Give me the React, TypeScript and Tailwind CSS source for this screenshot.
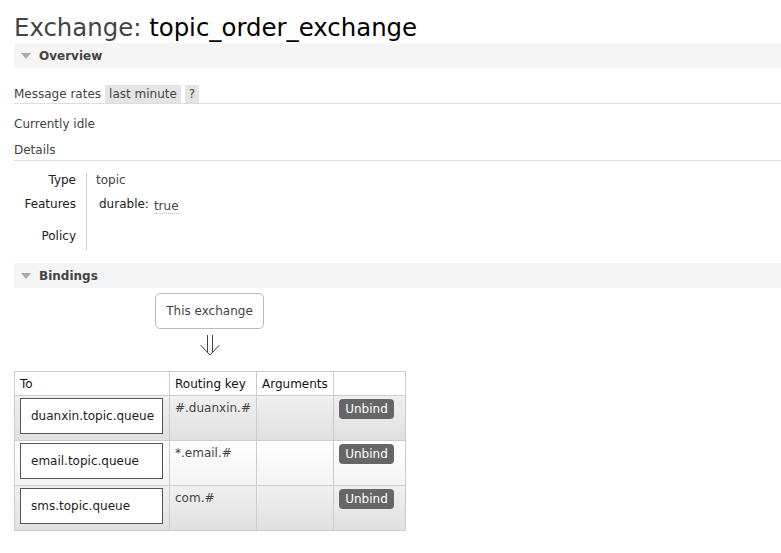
import React from "react";

const font = { fontFamily: '"DejaVu Sans", Verdana, sans-serif' };

function SectionBar({ title }: { title: string }) {
  return (
    <div className="flex items-center h-[25px] bg-[#f5f5f5] ml-[14px]">
      <svg width="10" height="6" viewBox="0 0 10 6" className="ml-[7px] mr-[8px]">
        <polygon points="0,0 10,0 5,6" fill="#aaa" />
      </svg>
      <span className="text-[12px] font-bold text-[#444]">{title}</span>
    </div>
  );
}

function UnbindBtn() {
  return (
    <span className="inline-flex items-center justify-center h-[20px] w-[55px] rounded-[4px] bg-[#666] text-white text-[12px]">
      Unbind
    </span>
  );
}

const rows = [
  { q: "duanxin.topic.queue", key: "#.duanxin.#", shade: "gray" },
  { q: "email.topic.queue", key: "*.email.#", shade: "white" },
  { q: "sms.topic.queue", key: "com.#", shade: "gray" },
];

export default function App() {
  return (
    <div className="w-[781px] h-[553px] bg-white overflow-hidden text-[#444]" style={font}>
      <h1 className="pl-[14px] pt-[13px] h-[43px] text-[24.4px] leading-[30px] text-[#444] whitespace-nowrap">
        Exchange: <span className="text-black">topic_order_exchange</span>
      </h1>
      <SectionBar title="Overview" />
      <div className="ml-[14px] mt-[17px] flex items-center h-[18px] border-b border-[#ddd] box-content">
        <span className="text-[12px] mr-[4px]">Message rates</span>
        <span className="text-[12px] bg-[#e4e4e4] px-[4px] h-[18px] leading-[18px]">last minute</span>
        <span className="text-[12px] bg-[#e4e4e4] px-[4px] ml-[4px] h-[18px] leading-[18px]">?</span>
      </div>
      <div className="ml-[14px] mt-[12px] text-[12px] leading-[16px]">Currently idle</div>
      <div className="ml-[14px] mt-[10px] text-[12px] leading-[16px] pb-[2px] border-b border-[#ddd]">Details</div>
      <div className="flex mt-[12px] text-[12px]">
        <div className="w-[76px] flex flex-col items-end text-[#222]">
          <div className="h-[17px] leading-[14px]">Type</div>
          <div className="h-[32px] mt-[7px] leading-[14px]">Features</div>
          <div className="h-[20px] leading-[14px]">Policy</div>
        </div>
        <div className="ml-[10px] w-px bg-[#ccc] h-[77px]" />
        <div className="pl-[9px] text-[#444]">
          <div className="h-[17px] leading-[14px]">topic</div>
          <div className="mt-[7px] leading-[14px] pl-[3px] flex">
            <span className="text-[#222]">durable:</span>
            <span className="ml-[5px] mt-[3px] border-b border-dotted border-[#bbb] leading-[13px]">true</span>
          </div>
        </div>
      </div>
      <div className="mt-[13px]">
        <SectionBar title="Bindings" />
      </div>
      <div className="ml-[14px] w-[391px] flex flex-col items-center">
        <div className="mt-[5px] w-[109px] h-[36px] border border-[#bbb] rounded-[5px] flex items-center justify-center text-[12px] text-[#444]">
          This exchange
        </div>
        <svg width="22" height="22" viewBox="0 0 22 22" className="mt-[6px]">
          <line x1="8.5" y1="0" x2="8.5" y2="18" stroke="#444" strokeWidth="1" />
          <line x1="13.5" y1="0" x2="13.5" y2="18" stroke="#444" strokeWidth="1" />
          <line x1="1.5" y1="10" x2="11" y2="20" stroke="#444" strokeWidth="1" />
          <line x1="20.5" y1="10" x2="11" y2="20" stroke="#444" strokeWidth="1" />
        </svg>
      </div>
      <table className="ml-[14px] mt-[14px] border-collapse text-[12px]">
        <thead>
          <tr className="h-[24px]">
            <th className="w-[155px] border border-[#ccc] text-left font-normal px-[5px] text-[#111]">To</th>
            <th className="w-[87px] border border-[#ccc] text-left font-normal px-[5px] text-[#111]">Routing key</th>
            <th className="w-[77px] border border-[#ccc] text-left font-normal px-[5px] text-[#111]">Arguments</th>
            <th className="w-[72px] border border-[#ccc]"></th>
          </tr>
        </thead>
        <tbody>
          {rows.map((r) => (
            <tr
              key={r.q}
              className={
                r.shade === "gray"
                  ? "h-[45px] bg-gradient-to-b from-[#f0f0f0] to-[#e0e0e0]"
                  : "h-[45px] bg-gradient-to-b from-[#ffffff] to-[#f3f3f3]"
              }
            >
              <td className="border border-[#ccc] px-[5px] py-[2px] align-top">
                <div className="h-[36px] w-[143px] border border-[#555] bg-white flex items-center pl-[10px] text-[12px] text-[#222]">
                  {r.q}
                </div>
              </td>
              <td className="border border-[#ccc] px-[5px] pt-[3px] align-top text-[#444]">{r.key}</td>
              <td className="border border-[#ccc]"></td>
              <td className="border border-[#ccc] align-top pt-[3px] pl-[5px]">
                <UnbindBtn />
              </td>
            </tr>
          ))}
        </tbody>
      </table>
    </div>
  );
}
